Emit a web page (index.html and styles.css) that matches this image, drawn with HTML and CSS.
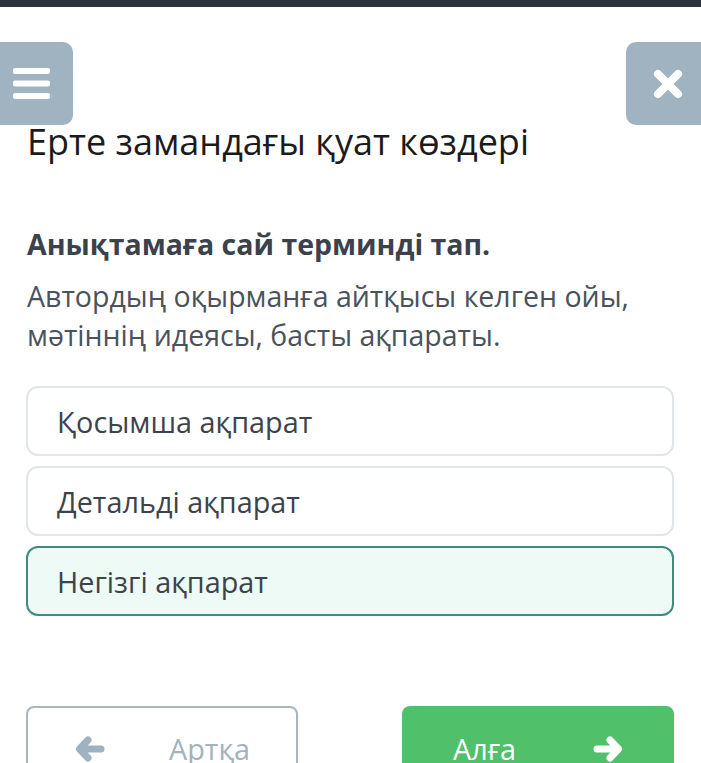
FILE: index.html
```html
<!DOCTYPE html>
<html>
<head>
    <title>Ерте замандағы қуат көздері</title>
    <link rel="stylesheet" href="styles.css">
</head>
<body>

<div class="top-bar"></div>

<div class="header">
    <a href="#" class="icon-button menu-button">
        <svg width="38" height="32" viewBox="0 0 38 32">
            <rect x="0" y="0" width="37" height="6" rx="2" fill="#fff"/>
            <rect x="0" y="12.5" width="37" height="6" rx="2" fill="#fff"/>
            <rect x="0" y="25" width="37" height="6" rx="2" fill="#fff"/>
        </svg>
    </a>
    <a href="#" class="icon-button close-button">
        <svg width="30" height="30" viewBox="0 0 30 30">
            <path d="M5 5 L25 25 M25 5 L5 25" stroke="#fff" stroke-width="8" stroke-linecap="round"/>
        </svg>
    </a>
</div>

<div class="container">
    <h1 class="title">Ерте замандағы қуат көздері</h1>

    <h2 class="question">Анықтамаға сай терминді тап.</h2>
    <p class="definition">Автордың оқырманға айтқысы келген ойы, мәтіннің идеясы, басты ақпараты.</p>

    <div class="options">
        <div class="option">Қосымша ақпарат</div>
        <div class="option">Детальді ақпарат</div>
        <div class="option selected">Негізгі ақпарат</div>
    </div>

    <div class="nav-buttons">
        <a href="#" class="nav-button back-button">
            <svg width="30" height="26" viewBox="0 0 30 26">
                <path d="M26 13 H6 M13 4 L4.5 13 L13 22" stroke="#9fb2c1" stroke-width="7" stroke-linecap="round" stroke-linejoin="round" fill="none"/>
            </svg>
            <span>Артқа</span>
        </a>
        <a href="#" class="nav-button next-button">
            <span>Алға</span>
            <svg width="30" height="26" viewBox="0 0 30 26">
                <path d="M4 13 H24 M17 4 L25.5 13 L17 22" stroke="#fff" stroke-width="7" stroke-linecap="round" stroke-linejoin="round" fill="none"/>
            </svg>
        </a>
    </div>
</div>

</body>
</html>
```

FILE: styles.css
```css
body {
    margin: 0;
    background-color: #fff;
    font-family: "Open Sans", "Noto Sans", sans-serif;
    overflow: hidden;
}

.top-bar {
    height: 7px;
    background-color: #2c333e;
}

.header {
    display: flex;
    justify-content: space-between;
    margin-top: 35px;
}

.icon-button {
    display: flex;
    align-items: center;
    justify-content: center;
    height: 83px;
    background-color: #9fb3c1;
}

.menu-button {
    width: 73px;
    border-radius: 0 10px 10px 0;
}

.menu-button svg {
    margin-left: -10px;
}

.close-button {
    width: 75px;
    border-radius: 10px 0 0 10px;
}

.close-button svg {
    margin-left: 8px;
}

.container {
    padding: 0 27px 0 26px;
}

.title {
    margin: -5px 0 0 1px;
    font-size: 36px;
    font-weight: 400;
    line-height: 44px;
    color: #1b1b1b;
}

.question {
    margin: 62px 0 0 1px;
    font-size: 28.5px;
    font-weight: 700;
    line-height: 36px;
    color: #3b424c;
}

.definition {
    margin: 15px 0 0 1px;
    font-size: 28.5px;
    line-height: 39px;
    color: #4b525b;
}

.options {
    display: flex;
    flex-direction: column;
    gap: 10px;
    margin-top: 31px;
}

.option {
    height: 66px;
    display: flex;
    align-items: center;
    padding-left: 29px;
    border: 2px solid #e3e6e9;
    border-radius: 12px;
    font-size: 28.8px;
    color: #3d434a;
}

.option.selected {
    background-color: #edfaf5;
    border-color: #3f8b82;
}

.nav-buttons {
    display: flex;
    justify-content: space-between;
    margin-top: 90px;
}

.nav-button {
    display: flex;
    align-items: center;
    width: 272px;
    height: 85px;
    box-sizing: border-box;
    border-radius: 8px;
    font-size: 28.8px;
    text-decoration: none;
}

.back-button {
    border: 2px solid #aab6bf;
    color: #a3b2bf;
    padding-left: 47px;
    gap: 64px;
}

.next-button {
    background-color: #51c06b;
    color: #fff;
    padding-left: 51px;
    gap: 77px;
}
```
